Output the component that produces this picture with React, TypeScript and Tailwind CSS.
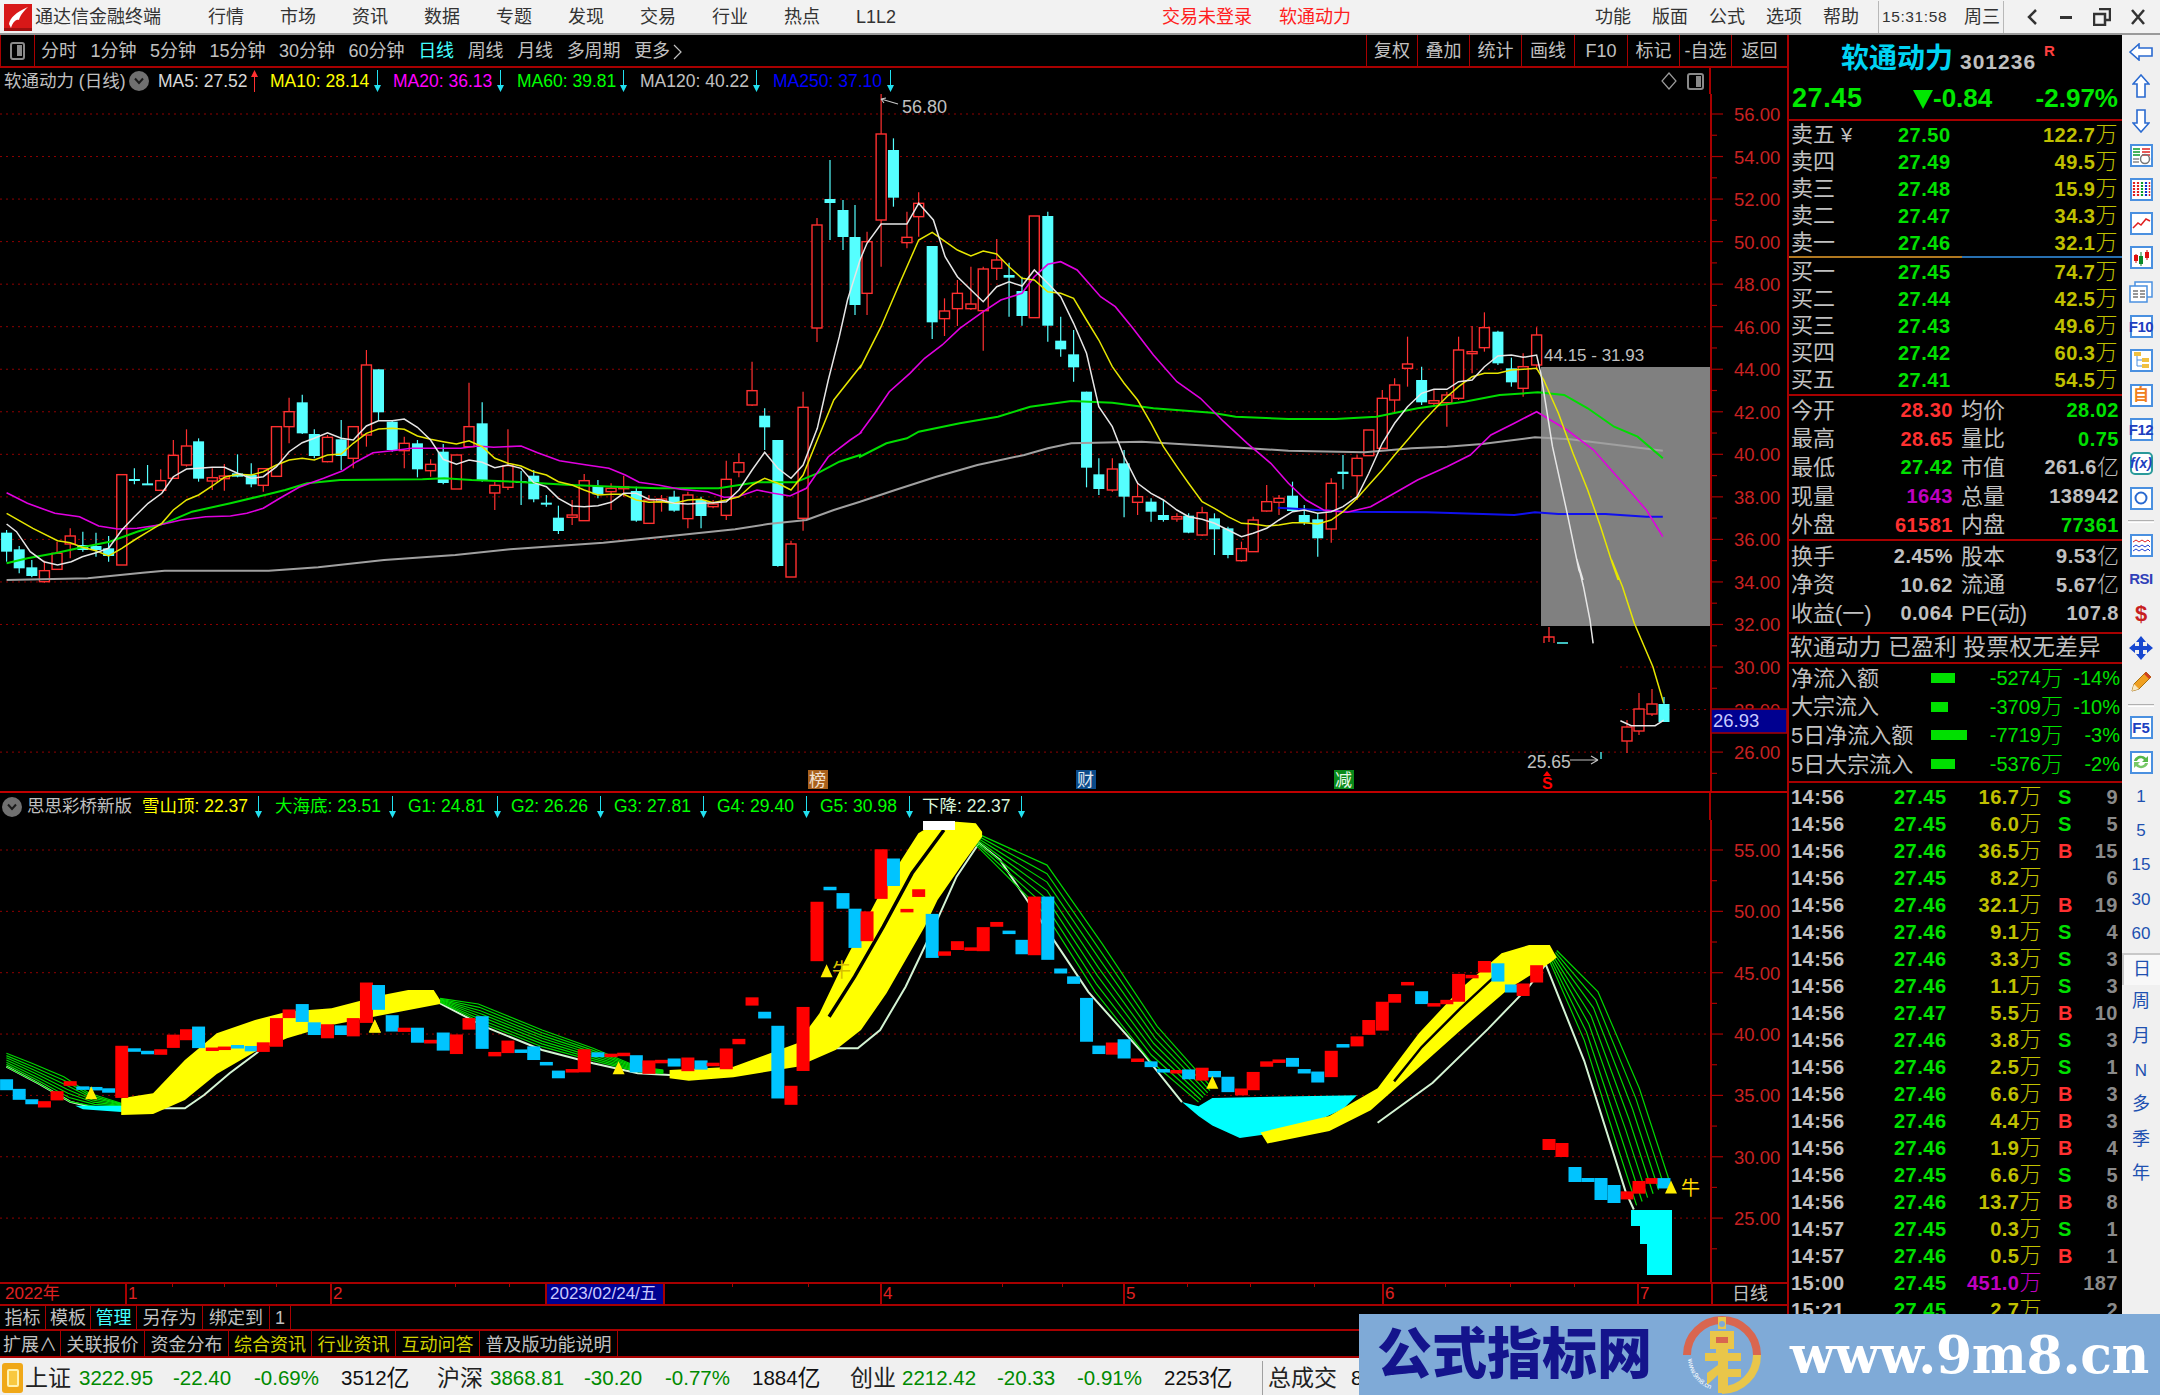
import React from "react";

type Pt = number[];
type Fn = (x: number, y: number) => [number, number];
const z9: Fn = (x, y) => [x / 1.823, y / 3 + 300];
const z10: Fn = (x, y) => [x / 1.704 + 860, y / 3 + 80];
const z11: Fn = (x, y) => [x / 2.306 + 1100, y / 3 + 560];
const z12: Fn = (x, y) => [x / 1.568, y / 3 + 800];
const sh: Fn = (x, y) => [x * 1.3776, y * 1.3776];

function conv(f: Fn, a: Pt): [number, number][] {
  const r: [number, number][] = [];
  for (let i = 0; i < a.length; i += 2) r.push(f(a[i], a[i + 1]));
  return r;
}
const str = (p: [number, number][]) => p.map((q) => `${q[0].toFixed(1)},${q[1].toFixed(1)}`).join(" ");

const ma5 = [
  ...conv(z9, [12,672,30,695,55,755,80,785,105,795,130,785,150,770,175,758,198,745,222,690,245,650,270,610,295,580,316,530,340,507,362,505,387,502,409,502,433,520,458,535,480,530,504,500,527,455,551,428,573,415,597,398,622,415,644,420,668,378,690,362,715,362,737,357,761,382,785,420,808,478,832,493,855,480,879,487,902,503,926,495,950,505,973,548,996,560,1018,595,1043,618,1065,620,1090,617,1114,607,1137,580,1160,580,1183,598,1206,600,1229,610,1254,612,1278,610,1300,608,1324,605,1347,570,1371,510,1394,457,1418,505,1442,535,1464,495,1490,385,1510,240,1530,110,1545,0]),
  ...conv(z10, [0,540,12,490,36,432,80,432,100,370,125,420,145,530,166,590,210,665,233,620,254,605,276,618,297,570,320,610,342,650,364,730,386,820,407,980,430,1040,450,1130,473,1210,496,1240,517,1260,540,1290,560,1310,583,1318,604,1330,627,1350,650,1370,670,1360,693,1345,714,1320,737,1295,757,1290,780,1300,803,1295,823,1280,847,1250,867,1180,890,1090,911,1030,933,980,957,940,978,928,1000,928,1020,905,1043,900,1064,860,1087,828,1110,825,1130,832,1153,825,1160,880,1180,1100,1205,1300,1225,1470,1232,1500]),
  ...conv(z11, [1100,0,1115,80,1130,180,1137,250]),
];
const ma5b = conv(z11, [1200,482,1225,497,1280,497,1295,485,1300,480]);
const ma10 = [
  ...conv(z9, [12,640,60,685,105,722,128,728,150,742,175,752,198,768,222,745,245,720,270,695,295,670,316,630,340,600,362,585,387,558,409,532,433,523,458,525,480,515,504,495,527,480,551,475,573,480,597,465,622,462,644,430,668,400,690,387,715,385,737,388,761,408,785,418,808,425,832,432,855,422,879,440,902,475,926,490,950,498,973,515,996,525,1018,545,1043,555,1065,570,1090,585,1114,583,1137,583,1160,600,1183,607,1206,605,1229,610,1254,600,1278,598,1300,608,1324,600,1347,590,1371,555,1394,535,1418,550,1442,570,1464,525,1490,420,1520,300,1568,200]),
  ...conv(z10, [0,865,36,740,70,600,100,480,123,457,166,510,189,528,210,513,233,522,254,560,276,595,297,600,320,635,342,640,364,655,386,720,407,780,430,860,450,910,473,960,496,1030,517,1100,540,1160,560,1210,583,1265,604,1285,627,1310,650,1330,670,1332,693,1338,714,1335,737,1328,757,1328,780,1332,803,1320,823,1295,847,1255,867,1215,890,1170,911,1125,933,1080,957,1030,978,990,1000,950,1020,920,1043,890,1064,880,1087,880,1110,870,1130,868,1153,865,1165,900,1190,1000,1215,1120,1240,1230,1262,1340,1282,1450,1292,1500]),
  ...conv(z11, [1180,0,1205,80,1232,190,1275,320,1300,430]),
];
const ma20 = [
  ...conv(z9, [12,578,50,610,100,640,145,650,180,678,215,687,250,685,290,675,330,660,375,650,420,648,450,640,480,625,510,595,545,562,590,535,625,512,650,485,680,458,715,452,750,445,800,445,840,445,870,438,900,442,950,438,980,458,1020,482,1070,495,1110,505,1140,525,1165,547,1200,555,1240,568,1290,575,1320,592,1345,590,1380,570,1410,580,1440,588,1470,565,1510,470,1550,420,1568,400]),
  ...conv(z10, [0,1060,25,1000,50,935,85,880,110,835,140,795,170,745,210,695,240,660,276,640,297,590,320,553,342,545,370,570,410,650,435,680,465,745,500,825,540,905,580,955,620,1025,660,1090,700,1150,730,1210,760,1260,790,1290,830,1297,870,1280,900,1250,950,1200,1000,1160,1040,1125,1075,1065,1115,1030,1153,995,1205,1050,1250,1110,1300,1210,1340,1290,1368,1370]),
];
const ma60 = [
  ...conv(z9, [12,790,50,775,100,760,150,742,200,725,250,695,300,670,350,635,420,610,470,590,520,570,560,550,620,540,770,538,810,535,860,540,940,545,1040,555,1120,560,1200,565,1310,565,1380,547,1450,547,1490,520,1530,485,1568,465]),
  ...conv(z10, [0,1130,45,1090,80,1075,100,1055,170,1030,235,1010,290,980,360,963,430,968,500,985,600,998,640,1010,730,1017,810,1017,880,1010,950,985,1030,965,1090,945,1155,937,1200,945,1240,985,1285,1040,1325,1070,1368,1135]),
];
const ma120 = [
  ...conv(z9, [12,840,160,835,260,818,300,812,490,812,580,802,700,780,830,765,930,748,1100,728,1200,712,1340,688,1400,672,1470,660,1520,630,1568,605]),
  ...conv(z10, [0,1265,60,1230,130,1190,200,1155,280,1125,320,1105,360,1090,480,1085,600,1098,730,1112,860,1117,940,1105,1000,1100,1060,1092,1150,1072,1210,1078,1300,1097,1368,1112]),
];
const ma250 = conv(z10, [712,1283,830,1295,965,1297,1075,1303,1115,1305,1150,1297,1190,1302,1270,1302,1340,1310,1368,1310]);

type C = { x: number; t: number; b: number; wt: number; wb: number; up: boolean };
const mk = (f: Fn, rows: (number | string)[][]): C[] =>
  rows.map((r) => {
    const [x, t] = f(r[0] as number, r[1] as number);
    const b = f(0, r[2] as number)[1];
    const wt = f(0, r[3] as number)[1];
    const wb = f(0, r[4] as number)[1];
    return { x, t, b, wt, wb, up: r[5] === "r" };
  });
const id: Fn = (x, y) => [x, y];

const candles: C[] = [
  ...mk(z9, [
    [12,698,755,690,785,"c"],[35,748,805,738,820,"c"],[58,802,828,780,832,"c"],[81,812,845,782,848,"r"],[104,760,808,725,810,"r"],[128,708,732,685,775,"r"],[151,735,750,695,755,"c"],[175,738,750,698,770,"c"],[198,745,768,708,785,"c"],[222,524,795,524,795,"r"],[245,537,541,505,553,"c"],[269,550,553,495,553,"c"],[293,542,571,508,573,"r"],[316,466,535,420,535,"r"],[340,438,495,388,500,"r"],[362,424,536,415,545,"c"],[387,533,543,505,570,"r"],[409,528,536,492,572,"r"],[433,520,530,463,532,"c"],[458,525,553,490,562,"c"],[480,506,556,505,575,"r"],[504,380,529,380,530,"r"],[527,335,380,293,430,"r"],[551,307,400,284,402,"c"],[573,402,468,388,475,"c"],[597,412,485,405,487,"r"],[622,418,468,360,510,"c"],[644,380,475,380,505,"r"],[668,195,405,150,440,"r"],[690,208,337,208,362,"c"],[715,365,450,360,455,"c"],[737,430,452,410,505,"r"],[761,430,508,420,532,"c"],[785,493,512,478,530,"r"],[808,455,549,432,553,"c"],[832,465,567,465,567,"r"],[855,380,440,248,440,"r"],[879,370,540,307,545,"c"],[902,556,579,545,630,"r"],[926,497,562,388,570,"r"],[950,543,545,513,615,"c"],[973,527,598,510,607,"c"],[996,608,612,585,620,"c"],[1018,653,693,617,702,"c"],[1043,645,652,600,675,"r"],[1065,542,662,522,662,"r"],[1090,558,583,540,595,"c"],[1114,565,575,550,630,"r"],[1137,560,565,527,590,"r"],[1160,573,662,560,665,"c"],[1183,600,670,585,670,"r"],[1206,597,605,585,635,"r"],[1229,590,632,572,635,"c"],[1254,585,656,575,685,"r"],[1278,600,648,590,685,"c"],[1300,612,620,600,625,"r"],[1324,538,646,482,660,"r"],[1347,488,516,460,532,"r"],[1371,272,315,185,318,"r"],[1394,347,382,325,450,"c"],[1418,420,798,420,800,"c"],[1442,732,831,722,831,"r"],[1464,322,655,275,692,"r"],
  ]),
  ...mk(id, [[817,225,328,218,342,"r"],[830,199,203,160,240,"c"],[843,210,237,200,250,"c"],[855,237,305,205,315,"c"]]),
  ...mk(z10, [
    [12,485,640,455,705,"r"],[36,162,420,20,560,"r"],[57,210,353,175,380,"c"],[80,472,488,395,505,"r"],[100,370,410,337,470,"r"],[123,498,727,498,777,"c"],[144,693,716,655,768,"r"],[166,640,686,600,738,"r"],[189,672,686,560,690,"r"],[210,567,692,560,812,"r"],[233,540,565,477,600,"r"],[254,585,593,548,710,"c"],[276,633,708,590,737,"c"],[297,408,713,408,713,"r"],[320,408,737,395,785,"c"],[342,782,808,710,830,"c"],[364,823,862,750,905,"c"],[386,935,1163,935,1222,"c"],[407,1183,1227,1135,1245,"c"],[430,1167,1230,1135,1235,"r"],[450,1150,1250,1110,1312,"c"],[473,1250,1267,1205,1305,"r"],[496,1265,1295,1255,1325,"c"],[517,1305,1320,1260,1325,"c"],[540,1310,1317,1300,1325,"r"],[560,1307,1358,1300,1360,"c"],[583,1298,1365,1280,1368,"r"],[604,1315,1348,1300,1425,"c"],[627,1345,1425,1340,1435,"c"],[650,1406,1442,1385,1445,"r"],[670,1320,1415,1310,1415,"r"],[693,1265,1293,1215,1295,"r"],[714,1255,1267,1245,1305,"r"],[737,1247,1293,1205,1295,"c"],[757,1305,1328,1275,1335,"c"],[780,1318,1375,1300,1430,"c"],[803,1210,1347,1195,1388,"r"],[823,1175,1182,1125,1228,"c"],[847,1135,1187,1125,1260,"r"],[867,1050,1127,1050,1127,"r"],[890,955,1105,930,1108,"r"],[911,915,960,895,1000,"r"],[933,852,865,770,920,"r"],[957,900,967,860,975,"c"],[978,962,970,930,975,"r"],[1000,945,968,935,1040,"r"],[1020,810,955,770,960,"r"],[1043,815,820,738,880,"r"],[1064,743,803,697,815,"r"],[1087,755,850,752,855,"c"],[1110,865,907,833,920,"c"],[1130,860,925,820,950,"r"],[1153,765,855,742,870,"r"],
  ]),
];
const tail: C[] = [
  ...mk(id, [[1627,727,741,720,753,"r"],[1639,709,731,693,735,"r"],[1652,704,714,689,716,"r"],[1664,704,722,697,722,"c"]]),
];
const subY = (y: number) => {
  const p = 56 - (y - 114) / 21.27;
  return 850 + (55 - p) * 12.27;
};
const subExtra: [number, number, number, boolean][] = [
  [1549, 1139, 1150, true],
  [1562, 1143, 1157, true],
  [1575, 1167, 1182, false],
  [1588, 1178, 1182, false],
  [1601, 1178, 1200, false],
  [1614, 1185, 1203, false],
];

const R = "#ff3030";
const CY = "#55ffff";

function CandleMark({ c }: { c: C }) {
  const col = c.up ? R : CY;
  const h = Math.max(c.b - c.t, 2);
  return (
    <g>
      <line x1={c.x} x2={c.x} y1={c.wt} y2={c.wb} stroke={col} strokeWidth={1.2} />
      {c.up ? (
        <rect x={c.x - 5} y={c.t} width={10} height={h} fill="#000" stroke={col} strokeWidth={1.4} />
      ) : (
        <rect x={c.x - 5.5} y={c.t} width={11} height={h} fill={col} />
      )}
    </g>
  );
}

function MainChart() {
  const prices = [56, 54, 52, 50, 48, 46, 44, 42, 40, 38, 36, 34, 32, 30, 28, 26];
  const py = (p: number) => 114 + (56 - p) * 21.27;
  const minor: number[] = [];
  for (let p = 25; p <= 57; p++) minor.push(p);
  return (
    <svg viewBox="0 94 1787 697" className="block h-[697px] w-[1787px]">
      {prices.map((p) => {
        const y = py(p);
        const dashed = "2 4";
        if (p === 30 || p === 28) return <line key={p} x1={1620} x2={1711} y1={y} y2={y} stroke="#900000" strokeDasharray={dashed} />;
        return <line key={p} x1={0} x2={1711} y1={y} y2={y} stroke="#900000" strokeDasharray={dashed} />;
      })}
      {candles.map((c, i) => (
        <CandleMark key={i} c={c} />
      ))}
      <rect x={1541} y={367} width={170} height={259} fill="#808080" />
      <polyline points={str(ma120)} fill="none" stroke="#a0a0a0" strokeWidth={2} />
      <polyline points={str(ma250)} fill="none" stroke="#1010ee" strokeWidth={2} />
      <polyline points={str(ma60)} fill="none" stroke="#00dd00" strokeWidth={2} />
      <polyline points={str(ma20)} fill="none" stroke="#e000e0" strokeWidth={1.6} />
      <polyline points={str(ma10)} fill="none" stroke="#e6e600" strokeWidth={1.5} />
      <polyline points={str(ma5)} fill="none" stroke="#e6e6e6" strokeWidth={1.5} />
      {/* tail after the gap */}
      <path d="M1549 642V627M1544 643V637H1554V643" fill="none" stroke={R} strokeWidth={1.3} />
      <line x1={1557} x2={1568} y1={643} y2={643} stroke={CY} strokeWidth={1.5} />
      <line x1={1601} x2={1601} y1={752} y2={759} stroke={CY} strokeWidth={1.3} />
      {tail.map((c, i) => (
        <CandleMark key={i} c={c} />
      ))}
      <polyline points={str(ma5b)} fill="none" stroke="#e6e6e6" strokeWidth={1.5} />
      {/* annotations */}
      <path d="M898 104L881 99M881 99l5 -1M881 99l3 4" fill="none" stroke="#c8c8c8" strokeWidth={1.1} />
      <text x={902} y={113} fontSize={18} fill="#c0c0c0">56.80</text>
      <text x={1544} y={361} fontSize={17} fill="#c0c0c0">44.15 - 31.93</text>
      <text x={1527} y={768} fontSize={17.5} fill="#c0c0c0">25.65</text>
      <path d="M1570 760H1598M1598 760l-7 -4M1598 760l-7 4" fill="none" stroke="#c0c0c0" strokeWidth={1.2} />
      <rect x={808} y={770} width={20} height={19} fill="#a8601c" />
      <text x={809} y={786} fontSize={17} fill="#f0e0d0">榜</text>
      <rect x={1076} y={770} width={20} height={19} fill="#0a4a8a" />
      <text x={1077} y={786} fontSize={17} fill="#e0e8f0">财</text>
      <rect x={1334} y={770} width={20} height={19} fill="#0a8a1a" />
      <text x={1335} y={786} fontSize={17} fill="#e8f8e8">减</text>
      <path d="M1547 771l4 5h-8z" fill="#ff0000" />
      <text x={1542} y={789} fontSize={16} fontWeight={700} fill="#ff0000">S</text>
      {/* axis */}
      <line x1={1711} x2={1711} y1={94} y2={791} stroke="#a80000" strokeWidth={2} />
      {minor.map((p) => (
        <line key={p} x1={1711} x2={p % 2 === 0 ? 1723 : 1717} y1={py(p)} y2={py(p)} stroke="#a80000" strokeWidth={1.2} />
      ))}
      {prices.map((p) => (
        <text key={p} x={1734} y={py(p) + 7} fontSize={18.5} fill="#c82222">{p.toFixed(2)}</text>
      ))}
      <rect x={1711} y={709} width={76} height={24} fill="#000090" stroke="#a80000" strokeWidth={1.5} />
      <text x={1713} y={727} fontSize={18.5} fill="#c8c8ff">26.93</text>
    </svg>
  );
}

const bandA = [...conv(z12, [190,895,240,880,290,780,340,700,400,660,450,635,520,625,600,585,640,570,680,570,690,600]), ...conv(z12, [690,612,600,645,520,675,450,715,400,755,340,822,290,900,240,942,190,945])];
const bandB = [...conv(z12, [1050,810,1150,800,1250,730,1285,640,1320,500,1380,280,1440,100,1470,65,1500,65,1530,70,1540,95]), ...conv(z12, [1540,110,1510,190,1470,300,1450,380,1420,480,1390,580,1350,690,1310,750,1250,800,1150,832,1080,842,1050,835])];
const bandC = [...conv(sh, [915,822,965,810,1000,790,1030,750,1060,718,1090,692,1110,686,1125,686,1130,695]), ...conv(sh, [1125,699,1095,718,1060,748,1030,775,995,806,965,821,920,830])];
const cyanBlock = conv(sh, [858,800,870,803,880,797,985,795,975,805,960,812,930,822,900,826,880,817,870,810]);
const paleParts = [
  conv(z12, [10,800,60,850,110,905,150,925,290,925,320,885,360,820,405,755]),
  [...conv(z12, [690,610,760,680,850,750,930,790,1000,820,1050,825,1150,825,1250,775,1310,745,1345,745,1380,690,1420,560,1460,400,1500,230,1535,130,1568,180]), ...conv(sh, [760,675,790,720,830,765,858,800])],
  conv(sh, [1000,815,1040,786,1080,747,1110,716,1122,700,1150,770,1180,865,1186,878]),
];
const gBands: [[number, number][], [number, number][]][] = [
  [conv(z12, [10,760,50,790,100,830,140,880,190,910]), conv(z12, [10,800,60,850,110,905,150,920,190,920])],
  [conv(z12, [690,595,750,612,850,690,930,745,1000,800,1040,810]), conv(z12, [690,607,760,672,850,740,930,782,1000,815,1040,820])],
  [conv(sh, [707,604,760,628,800,685,840,745,880,790]), conv(sh, [707,612,760,665,795,720,835,770,870,800])],
  [conv(sh, [1130,690,1160,720,1190,790,1212,858]), conv(sh, [1125,698,1150,755,1175,835,1188,875])],
];
const tris = [...conv(sh, [600,705,272,745,880,786,1213,862]), ...conv(z12, [143,880,588,680,970,805])];

function SubChart() {
  const levels = [55, 50, 45, 40, 35, 30, 25];
  const py = (p: number) => 850 + (55 - p) * 12.27;
  const ticks: number[] = [];
  for (let p = 22.5; p <= 60; p += 2.5) ticks.push(p);
  const green: React.ReactNode[] = [];
  gBands.forEach((b, k) => {
    for (let i = 0; i <= 6; i++) {
      const t = i / 6;
      const line = b[0].map((q, j) => [q[0] + (b[1][j][0] - q[0]) * t, q[1] + (b[1][j][1] - q[1]) * t] as [number, number]);
      green.push(<polyline key={`${k}-${i}`} points={str(line)} fill="none" stroke="#00d800" strokeWidth={1.2} />);
    }
  });
  return (
    <svg viewBox="0 820 1787 462" className="block h-[462px] w-[1787px]">
      {levels.map((p) => (
        <line key={p} x1={0} x2={1711} y1={py(p)} y2={py(p)} stroke="#900000" strokeDasharray="2 4" />
      ))}
      {paleParts.map((p, i) => (
        <polyline key={i} points={str(p)} fill="none" stroke="#d4f4d4" strokeWidth={2} />
      ))}
      {green}
      <polygon points={str(cyanBlock)} fill="#00ffff" />
      <polygon points={str(conv(z12, [118,917,205,917,190,936,130,928]))} fill="#00ffff" />
      <polygon points={str(bandA)} fill="#ffff00" />
      <polygon points={str(bandB)} fill="#ffff00" />
      <polygon points={str(bandC)} fill="#ffff00" />
      <polyline points={str(conv(z12, [1300,650,1340,530,1385,380,1430,220,1480,90]))} fill="none" stroke="#000" strokeWidth={3.5} />
      <polyline points={str(conv(sh, [1012,785,1032,760,1060,732,1088,706]))} fill="none" stroke="#000" strokeWidth={2.5} />
      <rect x={923} y={821} width={32} height={9} fill="#ffffff" />
      {candles.concat(tail).map((c, i) => {
        const t = subY(c.t);
        const b = subY(c.b);
        return <rect key={i} x={c.x - 6.5} y={t} width={13} height={Math.max(b - t, 3.5)} fill={c.up ? "#ff0000" : "#00c4ff"} />;
      })}
      {subExtra.map((e) => (
        <rect key={e[0]} x={e[0] - 6.5} y={e[1]} width={13} height={e[2] - e[1]} fill={e[3] ? "#ff0000" : "#00c4ff"} />
      ))}
      <path d="M1631 1210H1672V1275H1647V1244H1640V1226H1631Z" fill="#00ffff" />
      {tris.map((q, i) => (
        <path key={i} d={`M${q[0].toFixed(1)} ${(q[1] - 7).toFixed(1)}l6 13h-12z`} fill="#ffee00" />
      ))}
      <text x={832} y={977} fontSize={19} fill="#d8c000">牛</text>
      <text x={1681} y={1195} fontSize={19} fill="#ffd800">牛</text>
      <line x1={1711} x2={1711} y1={820} y2={1282} stroke="#a80000" strokeWidth={2} />
      {ticks.map((p) => (
        <line key={p} x1={1711} x2={p % 5 === 0 ? 1723 : 1717} y1={py(p)} y2={py(p)} stroke="#a80000" strokeWidth={1.2} />
      ))}
      {levels.map((p) => (
        <text key={p} x={1734} y={py(p) + 7} fontSize={18.5} fill="#c82222">{p.toFixed(2)}</text>
      ))}
    </svg>
  );
}

function Arrow({ up }: { up?: boolean }) {
  const c = up ? "#ff3030" : "#22e0f0";
  return (
    <svg width="9" height="22" viewBox="0 0 9 22" className="shrink-0">
      {up ? <path d="M4.5 0L8 7H5V22H4V7H1Z" fill={c} /> : <path d="M4 0H5V15H8L4.5 22L1 15H4Z" fill={c} />}
    </svg>
  );
}

function Badge() {
  return (
    <span className="flex h-[20px] w-[20px] shrink-0 items-center justify-center rounded-full bg-[#707070]">
      <svg width="10" height="8" viewBox="0 0 10 8"><path d="M1 1.5L5 6L9 1.5" fill="none" stroke="#1a1a1a" strokeWidth="2" /></svg>
    </span>
  );
}

function MainLegend() {
  return (
    <div className="relative flex h-[26px] w-[1711px] items-center border-r-2 border-[#a80000] text-[17.5px] whitespace-nowrap">
      <span className="ml-[4px] w-[125px] text-[#c0c0c0]">软通动力 (日线)</span>
      <Badge />
      <span className="ml-[9px] w-[92px] text-[#d8d8d8]">MA5: 27.52</span>
      <Arrow up />
      <span className="ml-[11px] w-[103px] text-[#ffff00]">MA10: 28.14</span>
      <Arrow />
      <span className="ml-[11px] w-[103px] text-[#ff00ff]">MA20: 36.13</span>
      <Arrow />
      <span className="ml-[12px] w-[102px] text-[#00ff00]">MA60: 39.81</span>
      <Arrow />
      <span className="ml-[12px] w-[112px] text-[#c0c0c0]">MA120: 40.22</span>
      <Arrow />
      <span className="ml-[12px] w-[113px] text-[#0000ff]">MA250: 37.10</span>
      <Arrow />
      <svg width="16" height="20" viewBox="0 0 16 20" className="absolute left-[1661px] top-[3px]"><path d="M8 2L15 10L8 18L1 10Z" fill="none" stroke="#9a9a9a" strokeWidth="1.2" /></svg>
      <span className="absolute left-[1687px] top-[5px] flex h-[17px] w-[17px] items-center justify-end rounded-[3px] border-2 border-[#8a8a8a] pr-[1px]"><span className="h-[11px] w-[5px] bg-[#8a8a8a]" /></span>
    </div>
  );
}

function SubLegend() {
  const g = [
    { t: "G1: 24.81", m: "ml-[11px]" },
    { t: "G2: 26.26", m: "ml-[9px]" },
    { t: "G3: 27.81", m: "ml-[9px]" },
    { t: "G4: 29.40", m: "ml-[9px]" },
    { t: "G5: 30.98", m: "ml-[9px]" },
  ];
  return (
    <div className="flex h-[27px] w-[1711px] items-center border-r-2 border-[#a80000] text-[17.5px] whitespace-nowrap">
      <span className="ml-[2px]"><Badge /></span>
      <span className="ml-[5px] w-[115px] text-[17.5px] text-[#c0c0c0]">思思彩桥新版</span>
      <span className="w-[112px] text-[#ffff00]">雪山顶: 22.37</span>
      <Arrow />
      <span className="ml-[12px] w-[113px] text-[#00ff00]">大海底: 23.51</span>
      <Arrow />
      {g.map((x) => (
        <React.Fragment key={x.t}>
          <span className={`${x.m} w-[85px] text-[#00ff00]`}>{x.t}</span>
          <Arrow />
        </React.Fragment>
      ))}
      <span className="ml-[8px] w-[95px] text-[#d8f4d8]">下降: 22.37</span>
      <Arrow />
    </div>
  );
}

function TitleBar() {
  const menu = ["行情", "市场", "资讯", "数据", "专题", "发现", "交易", "行业", "热点", "L1L2"];
  const right = ["功能", "版面", "公式", "选项", "帮助"];
  return (
    <div className="flex h-[35px] w-[2160px] items-center border-b-2 border-[#9a9a9a] bg-[#f2f2f2] pt-[1px] text-[18px] whitespace-nowrap text-[#333333]">
      <svg width="28" height="27" viewBox="0 0 28 27" className="ml-[4px] shrink-0">
        <rect width="28" height="27" fill="#d81818" />
        <path d="M5 20C6 14 12 8 24 3C18 9 16 12 15 16C13 15 9 17 7 24Z" fill="#ffffff" />
        <rect y="24" width="28" height="3" fill="#a01010" />
      </svg>
      <span className="ml-[3px] w-[173px]">通达信金融终端</span>
      <div className="flex gap-[36px]">
        {menu.map((m) => (
          <span key={m} className="w-[36px]">{m}</span>
        ))}
      </div>
      <span className="ml-[270px] w-[117px] text-[#ff2020]">交易未登录</span>
      <span className="w-[316px] text-[#ff2020]">软通动力</span>
      <div className="flex gap-[21px]">
        {right.map((m) => (
          <span key={m} className="w-[36px]">{m}</span>
        ))}
      </div>
      <div className="ml-[19px] flex h-full items-center border-x border-[#b8b8b8] pl-[3px] pr-[3px] text-[16px]">
        <span className="w-[82px] tracking-[0.6px] text-[15.5px]">15:31:58</span>
        <span className="text-[18px]">周三</span>
      </div>
      <svg width="12" height="18" viewBox="0 0 12 18" className="ml-[22px]"><path d="M10 2L3 9L10 16" fill="none" stroke="#333" strokeWidth="2.5" /></svg>
      <span className="ml-[22px] h-[3px] w-[12px] bg-[#333333]" />
      <svg width="18" height="18" viewBox="0 0 18 18" className="ml-[21px]"><path d="M6 1h11v11h-4M1 6h11v11H1z" fill="none" stroke="#333" strokeWidth="2.5" /></svg>
      <svg width="16" height="16" viewBox="0 0 16 16" className="ml-[19px]"><path d="M2 1L14 15M14 1L2 15" stroke="#333" strokeWidth="2.5" /></svg>
    </div>
  );
}

function ChartToolbar() {
  const periods = ["分时", "1分钟", "5分钟", "15分钟", "30分钟", "60分钟", "日线", "周线", "月线", "多周期"];
  const tools = [
    { t: "复权", w: "w-[51px]" },
    { t: "叠加", w: "w-[52px]" },
    { t: "统计", w: "w-[52px]" },
    { t: "画线", w: "w-[53px]" },
    { t: "F10", w: "w-[53px]" },
    { t: "标记", w: "w-[52px]" },
    { t: "-自选", w: "w-[52px]" },
    { t: "返回", w: "w-[56px]" },
  ];
  return (
    <div className="flex h-[33px] w-[1787px] items-center border-b-2 border-[#a80000] text-[18px] whitespace-nowrap text-[#c0c0c0]">
      <div className="flex h-full w-[35px] items-center justify-center border-x border-[#a80000]">
        <span className="flex h-[18px] w-[15px] items-center justify-end rounded-[3px] border-2 border-[#8a8a8a] pr-[1px]"><span className="h-[11px] w-[5px] bg-[#8a8a8a]" /></span>
      </div>
      <div className="ml-[6px] flex w-[1325px] items-center gap-[13.5px] pt-[2px]">
        {periods.map((p) => (
          <span key={p} className={p === "日线" ? "text-[#44ffff]" : ""}>{p}</span>
        ))}
        <span className="flex items-center gap-[3px]">更多<svg width="9" height="16" viewBox="0 0 9 16"><path d="M1 1L8 8L1 15" fill="none" stroke="#c0c0c0" strokeWidth="1.2" /></svg></span>
      </div>
      <div className="flex h-full">
        {tools.map((t) => (
          <span key={t.t} className={`flex ${t.w} h-full items-center justify-center border-l border-[#a80000] pt-[2px]`}>{t.t}</span>
        ))}
      </div>
    </div>
  );
}

function TimeAxis() {
  const segs = [
    { t: "2022年", w: "w-[125px] pl-[5px]", c: "text-[#e02020]" },
    { t: "1", w: "w-[205px] pl-[1px]", c: "text-[#e02020]" },
    { t: "2", w: "w-[215px] pl-[1px]", c: "text-[#e02020]" },
    { t: "2023/02/24/五", w: "w-[118px] pl-[3px] bg-[#000090]", c: "text-[#c8c8ff]" },
    { t: "", w: "w-[217px]", c: "" },
    { t: "4", w: "w-[243px] pl-[1px]", c: "text-[#e02020]" },
    { t: "5", w: "w-[259px] pl-[1px]", c: "text-[#e02020]" },
    { t: "6", w: "w-[255px] pl-[1px]", c: "text-[#e02020]" },
    { t: "7", w: "w-[74px] pl-[1px]", c: "text-[#e02020]" },
  ];
  const ticks = [172, 224, 276, 455, 509, 732, 808, 1002, 1062, 1187, 1250, 1314, 1445, 1510, 1574];
  return (
    <div className="relative flex h-[24px] w-[1787px] border-y-2 border-[#a80000] text-[17px] whitespace-nowrap">
      {segs.map((s, i) => (
        <span key={i} className={`flex ${s.w} h-full items-center ${s.c} ${i > 0 ? "border-l-2 border-[#a80000]" : ""}`}>{s.t}</span>
      ))}
      <span className="flex h-full w-[76px] items-center justify-center border-l-2 border-[#a80000] text-[18px] text-[#c0c0c0]">日线</span>
      {ticks.map((x, i) => (
        <span key={i} className="absolute top-0 h-[3px] w-[1px] bg-[#a80000]" style={{ left: x }} />
      ))}
    </div>
  );
}

function TabRows() {
  const a = [
    { t: "指标", w: "w-[46px]", c: "" },
    { t: "模板", w: "w-[45px]", c: "" },
    { t: "管理", w: "w-[46px]", c: "text-[#44ffff]" },
    { t: "另存为", w: "w-[66px]", c: "" },
    { t: "绑定到", w: "w-[67px]", c: "" },
    { t: "1", w: "w-[21px]", c: "" },
  ];
  const b = [
    { t: "扩展∧", w: "w-[61px]", c: "" },
    { t: "关联报价", w: "w-[84px]", c: "" },
    { t: "资金分布", w: "w-[84px]", c: "" },
    { t: "综合资讯", w: "w-[83px]", c: "text-[#d0d000]" },
    { t: "行业资讯", w: "w-[84px]", c: "text-[#d0d000]" },
    { t: "互动问答", w: "w-[84px]", c: "text-[#d0d000]" },
    { t: "普及版功能说明", w: "w-[138px]", c: "" },
  ];
  return (
    <>
      <div className="flex h-[25px] w-[1787px] items-stretch border-b-2 border-[#a80000] text-[18px] whitespace-nowrap text-[#c0c0c0]">
        {a.map((x) => (
          <span key={x.t} className={`flex ${x.w} items-center justify-center border-r border-[#a80000] pt-[2px] ${x.c}`}>{x.t}</span>
        ))}
      </div>
      <div className="flex h-[27px] w-[1787px] items-stretch border-b-2 border-[#a80000] text-[18px] whitespace-nowrap text-[#c0c0c0]">
        {b.map((x) => (
          <span key={x.t} className={`flex ${x.w} items-center justify-center border-r border-[#a80000] pt-[3px] ${x.c}`}>{x.t}</span>
        ))}
      </div>
    </>
  );
}

const Wan = ({ c }: { c?: string }) => <span className={`text-[22px] font-light leading-none ${c ?? "text-[#c0c000]"}`}>万</span>;

function Quote({ l, p, v, y }: { l: string; p: string; v: string; y?: boolean }) {
  return (
    <div className="flex h-[27px] items-center overflow-hidden pl-[2px] pr-[4px]">
      <span className="flex w-[107px] items-center text-[22px] text-[#c0c0c0]">
        {l}
        {y && <span className="ml-[6px] text-[20px]">¥</span>}
      </span>
      <span className="w-[55px] text-[20px] font-bold tracking-[0.5px] text-[#00e000]">{p}</span>
      <span className="flex flex-1 items-center justify-end text-[20px] font-bold tracking-[0.5px] text-[#c0c000]">
        {v}
        <Wan />
      </span>
    </div>
  );
}

function Yi({ v }: { v: string }) {
  return (
    <span className="flex items-center justify-end">
      {v}
      <span className="text-[22px] font-light tracking-normal">亿</span>
    </span>
  );
}

function Info({ a, av, ac, b, bv, bc }: { a: string; av: string; ac: string; b: string; bv: React.ReactNode; bc: string }) {
  return (
    <div className="flex h-[28.6px] items-center overflow-hidden pl-[2px] pr-[3px] text-[22px] text-[#c0c0c0]">
      <span className="w-[72px] whitespace-nowrap">{a}</span>
      <span className={`w-[90px] text-right text-[20px] font-bold tracking-[0.5px] whitespace-nowrap ${ac}`}>{av}</span>
      <span className="ml-[8px] whitespace-nowrap">{b}</span>
      <span className={`flex-1 text-right text-[20px] font-bold tracking-[0.5px] whitespace-nowrap ${bc}`}>{bv}</span>
    </div>
  );
}

function Flow({ l, bar, v, pc }: { l: string; bar: string; v: string; pc: string }) {
  return (
    <div className="flex h-[28.6px] items-center overflow-hidden pl-[2px] pr-[2px]">
      <span className="w-[140px] text-[22px] whitespace-nowrap text-[#c0c0c0]">{l}</span>
      <span className="w-[52px]"><span className={`block h-[10px] ${bar} bg-[#00e000]`} /></span>
      <span className="flex w-[80px] items-center justify-end text-[20px] text-[#00e000]">{v}<span className="text-[22px] font-light">万</span></span>
      <span className="flex-1 text-right text-[20px] text-[#00e000]">{pc}</span>
    </div>
  );
}

const trades: [string, string, string, string, string, string?][] = [
  ["14:56","27.45","16.7","S","9"],["14:56","27.45","6.0","S","5"],["14:56","27.46","36.5","B","15"],["14:56","27.45","8.2","","6"],["14:56","27.46","32.1","B","19"],["14:56","27.46","9.1","S","4"],["14:56","27.46","3.3","S","3"],["14:56","27.46","1.1","S","3"],["14:56","27.47","5.5","B","10"],["14:56","27.46","3.8","S","3"],["14:56","27.46","2.5","S","1"],["14:56","27.46","6.6","B","3"],["14:56","27.46","4.4","B","3"],["14:56","27.46","1.9","B","4"],["14:56","27.45","6.6","S","5"],["14:56","27.46","13.7","B","8"],["14:57","27.45","0.3","S","1"],["14:57","27.46","0.5","B","1"],["15:00","27.45","451.0","","187","p"],["15:21","27.45","2.7","","2"],
];

function RightPanel() {
  return (
    <div className="flex h-[1323px] w-[335px] shrink-0 flex-col overflow-hidden border-l-2 border-[#a80000] bg-black whitespace-nowrap">
      <div className="flex h-[43px] items-end pl-[52px]">
        <span className="text-[28px] font-bold leading-[38px] text-[#00d4f4]">软通动力</span>
        <span className="ml-[7px] mb-[3px] text-[21px] font-bold tracking-[1px] leading-[26px] text-[#c0c0c0]">301236</span>
        <span className="ml-[8px] mb-[18px] text-[15px] font-bold leading-[18px] text-[#ff4040]">R</span>
      </div>
      <div className="flex h-[41px] items-center pl-[3px] pr-[4px] font-bold text-[#00e800]">
        <span className="w-[121px] text-[27px] tracking-[0.6px]">27.45</span>
        <svg width="20" height="20" viewBox="0 0 20 20" className="shrink-0"><path d="M0 1H20L10 20Z" fill="#00e800" /></svg>
        <span className="w-[91px] text-[26px]">-0.84</span>
        <span className="flex-1 text-right text-[26px]">-2.97%</span>
      </div>
      <div className="h-[137px] border-t-2 border-[#a80000]">
        <Quote l="卖五" p="27.50" v="122.7" y />
        <Quote l="卖四" p="27.49" v="49.5" />
        <Quote l="卖三" p="27.48" v="15.9" />
        <Quote l="卖二" p="27.47" v="34.3" />
        <Quote l="卖一" p="27.46" v="32.1" />
      </div>
      <div className="flex h-[2px]"><span className="w-[173px] bg-[#b07820]" /><span className="flex-1 bg-[#2870b0]" /></div>
      <div className="h-[136px]">
        <Quote l="买一" p="27.45" v="74.7" />
        <Quote l="买二" p="27.44" v="42.5" />
        <Quote l="买三" p="27.43" v="49.6" />
        <Quote l="买四" p="27.42" v="60.3" />
        <Quote l="买五" p="27.41" v="54.5" />
      </div>
      <div className="h-[145px] border-t-2 border-[#a80000]">
        <Info a="今开" av="28.30" ac="text-[#ff3030]" b="均价" bv="28.02" bc="text-[#00e000]" />
        <Info a="最高" av="28.65" ac="text-[#ff3030]" b="量比" bv="0.75" bc="text-[#00e000]" />
        <Info a="最低" av="27.42" ac="text-[#00e000]" b="市值" bv={<Yi v="261.6" />} bc="" />
        <Info a="现量" av="1643" ac="text-[#c000c0]" b="总量" bv="138942" bc="" />
        <Info a="外盘" av="61581" ac="text-[#ff3030]" b="内盘" bv="77361" bc="text-[#00e000]" />
      </div>
      <div className="h-[93px] border-t-2 border-[#a80000]">
        <div className="h-[1px]" />
        <Info a="换手" av="2.45%" ac="" b="股本" bv={<Yi v="9.53" />} bc="" />
        <Info a="净资" av="10.62" ac="" b="流通" bv={<Yi v="5.67" />} bc="" />
        <Info a="收益(一)" av="0.064" ac="" b="PE(动)" bv="107.8" bc="" />
      </div>
      <div className="flex h-[30px] items-center border-t-2 border-[#a80000] pl-[1px] text-[22.5px] tracking-[0.4px] text-[#c0c0c0]">软通动力 已盈利 投票权无差异</div>
      <div className="h-[119px] border-t-2 border-[#a80000]">
        <Flow l="净流入额" bar="w-[24px]" v="-5274" pc="-14%" />
        <Flow l="大宗流入" bar="w-[17px]" v="-3709" pc="-10%" />
        <Flow l="5日净流入额" bar="w-[36px]" v="-7719" pc="-3%" />
        <Flow l="5日大宗流入" bar="w-[24px]" v="-5376" pc="-2%" />
      </div>
      <div className="border-t-2 border-[#a80000]">
        {trades.map((t, i) => (
          <div key={i} className="flex h-[27px] items-center pl-[2px] pr-[4px] text-[20px] font-bold tracking-[0.5px]">
            <span className="w-[103px] text-[#c0c0c0]">{t[0]}</span>
            <span className="w-[60px] text-[#00e000]">{t[1]}</span>
            <span className={`flex w-[88px] items-center justify-end ${t[5] ? "text-[#c000c0]" : "text-[#c0c000]"}`}>
              {t[2]}
              <Wan c={t[5] ? "text-[#c000c0]" : "text-[#c0c000]"} />
            </span>
            <span className={`ml-[16px] w-[20px] ${t[3] === "B" ? "text-[#ff3030]" : "text-[#00e000]"}`}>{t[3]}</span>
            <span className="flex-1 text-right text-[#8a8a8a]">{t[4]}</span>
          </div>
        ))}
      </div>
    </div>
  );
}

function Tile({ children }: { children: React.ReactNode }) {
  return <span className="flex h-[23px] w-[23px] items-center justify-center border-2 border-[#4a90e0] bg-white">{children}</span>;
}

const Blue = "#2a6ad0";
function SideBar() {
  const lbl = "flex h-[34.3px] items-center justify-center text-[17px] text-[#2050b0]";
  const ic = "flex h-[34.3px] items-center justify-center";
  const cj = "text-[18px]";
  return (
    <div className="flex h-[1323px] w-[38px] shrink-0 flex-col bg-[#f0f0f0]">
      <div className={ic}><svg width="24" height="18" viewBox="0 0 24 18"><path d="M1 9L10 1V5H23V13H10V17Z" fill="#fff" stroke={Blue} strokeWidth="1.6" /></svg></div>
      <div className={ic}><svg width="18" height="24" viewBox="0 0 18 24"><path d="M9 1L17 10H13V23H5V10H1Z" fill="#fff" stroke={Blue} strokeWidth="1.6" /></svg></div>
      <div className={ic}><svg width="18" height="24" viewBox="0 0 18 24"><path d="M9 23L17 14H13V1H5V14H1Z" fill="#fff" stroke={Blue} strokeWidth="1.6" /></svg></div>
      <div className={ic}><Tile><svg width="19" height="19" viewBox="0 0 19 19"><path d="M1 3h7M1 6h7M1 9h7" stroke="#0a9a2a" strokeWidth="1.5" /><path d="M10 3h8M10 6h8M10 9h8" stroke="#e02020" strokeWidth="1.5" /><path d="M1 13h6M1 16h6" stroke="#888" strokeWidth="1.5" /><circle cx="13" cy="13" r="4.5" fill="none" stroke="#777" strokeWidth="1.5" /></svg></Tile></div>
      <div className={ic}><Tile><svg width="19" height="19" viewBox="0 0 19 19"><path d="M2 2v15M6 2v15" stroke="#e02020" strokeWidth="2.2" strokeDasharray="2 1" /><path d="M10 2v15" stroke="#0a9a2a" strokeWidth="2.2" strokeDasharray="2 1" /><path d="M14 2v15" stroke="#1030d0" strokeWidth="2.2" strokeDasharray="2 1" /><path d="M17.5 2v15" stroke="#e02020" strokeWidth="1.5" strokeDasharray="2 1" /></svg></Tile></div>
      <div className={ic}><Tile><svg width="19" height="19" viewBox="0 0 19 19"><path d="M1 14L6 9L9 11L14 5L18 7" fill="none" stroke="#e02020" strokeWidth="1.5" /></svg></Tile></div>
      <div className={ic}><Tile><svg width="19" height="19" viewBox="0 0 19 19"><path d="M4 6v9M15 2v10" stroke="#c01010" /><path d="M9 4v14" stroke="#0a7a2a" /><rect x="2" y="7" width="4" height="6" fill="#e01010" /><rect x="7" y="8" width="4" height="8" fill="#0a8a2a" /><rect x="13" y="4" width="4" height="6" fill="#e01010" /></svg></Tile></div>
      <div className={ic}><svg width="24" height="22" viewBox="0 0 24 22"><rect x="6" y="1" width="17" height="15" fill="#fff" stroke="#4a90e0" strokeWidth="1.5" /><rect x="1" y="5" width="17" height="16" fill="#fff" stroke="#4a90e0" strokeWidth="1.5" /><path d="M4 10h5M11 10h5M4 13h5M11 13h5M4 16h5M11 16h5" stroke="#777" strokeWidth="1.3" /></svg></div>
      <div className={ic}><Tile><span className="text-[15px] font-bold leading-none tracking-[-0.5px] text-[#2040c0]">F10</span></Tile></div>
      <div className={ic}><Tile><svg width="19" height="19" viewBox="0 0 19 19"><rect x="2" y="1" width="7" height="4" fill="#f0c040" /><rect x="10" y="7" width="7" height="4" fill="#f0c040" /><rect x="10" y="13" width="7" height="4" fill="#f0c040" /><path d="M5 5v10h5M5 9h5" fill="none" stroke="#4a90e0" /></svg></Tile></div>
      <div className={ic}><Tile><span className="text-[16px] font-bold leading-none text-[#f08020]">自</span></Tile></div>
      <div className={ic}><Tile><span className="text-[15px] font-bold leading-none tracking-[-0.5px] text-[#2040c0]">F12</span></Tile></div>
      <div className={ic}><span className="flex h-[23px] w-[23px] items-center justify-center rounded-[5px] border-2 border-[#2a9a9a] bg-white text-[14px] font-bold italic text-[#2040c0]">f(x)</span></div>
      <div className={ic}><Tile><svg width="16" height="16" viewBox="0 0 16 16"><circle cx="8" cy="8" r="5.5" fill="none" stroke="#2a6ad0" strokeWidth="2" /></svg></Tile></div>
      <div className="mx-[6px] my-[5px] h-[3px] border-y border-t-[#b0b0b0] border-b-white" />
      <div className={ic}><Tile><svg width="19" height="19" viewBox="0 0 19 19"><path d="M1 6l3-2 3 2 3-2 3 2 3-2 2 2" fill="none" stroke="#e02020" /><path d="M1 11l3-2 3 2 3-2 3 2 3-2 2 2" fill="none" stroke="#2040d0" /><path d="M1 15l3-2 3 2 3-2 3 2 3-2 2 2" fill="none" stroke="#2040d0" /></svg></Tile></div>
      <div className={`${ic} text-[15px] font-bold tracking-[-0.5px] text-[#3040b8]`}>RSI</div>
      <div className={`${ic} text-[22px] font-bold leading-none text-[#c82020]`}>$</div>
      <div className={ic}><svg width="26" height="26" viewBox="0 0 26 26"><path d="M13 1l5 6h-3v4h4V8l6 5-6 5v-3h-4v4h3l-5 6-5-6h3v-4H7v3l-6-5 6-5v3h4V7H8z" fill="#1848d0" /></svg></div>
      <div className={ic}><svg width="24" height="24" viewBox="0 0 24 24"><path d="M3 21L5 14L17 2L22 7L10 19Z" fill="#f0a020" stroke="#a87010" /><path d="M3 21L5 14L10 19Z" fill="#f8e8c0" /><path d="M17 2L22 7L20 9L15 4Z" fill="#d04020" /></svg></div>
      <div className="mx-[6px] my-[4px] h-[3px] border-y border-t-[#b0b0b0] border-b-white" />
      <div className={ic}><Tile><span className="text-[15px] font-bold leading-none text-[#2040c0]">F5</span></Tile></div>
      <div className={ic}><Tile><svg width="18" height="18" viewBox="0 0 18 18"><path d="M2 8C3 3 10 1 14 5l2-2v6h-6l2-2C10 4 6 5 5 8Z" fill="#58b848" /><path d="M16 10c-1 5-8 7-12 3l-2 2V9h6l-2 2c2 3 6 2 7-1Z" fill="#78c868" /></svg></Tile></div>
      <div className={lbl}>1</div>
      <div className={lbl}>5</div>
      <div className={lbl}>15</div>
      <div className={lbl}>30</div>
      <div className={lbl}>60</div>
      <div className="mt-[2px] flex h-[32px] items-center justify-center border-t-2 border-l-2 border-[#c8c8c8] bg-[#f8f8f8] text-[18px] text-[#2050b0]">日</div>
      <div className={`${lbl} ${cj}`}>周</div>
      <div className={`${lbl} ${cj}`}>月</div>
      <div className={lbl}>N</div>
      <div className={`${lbl} ${cj}`}>多</div>
      <div className={`${lbl} ${cj}`}>季</div>
      <div className={`${lbl} ${cj}`}>年</div>
    </div>
  );
}

function StatusBar() {
  const G = "text-[#008a00]";
  const seq = [
    { t: "3222.95", w: "w-[94px]" }, { t: "-22.40", w: "w-[81px]" }, { t: "-0.69%", w: "w-[87px]" },
  ];
  const N = ({ t, w }: { t: string; w: string }) => <span className={`${w} text-[20.5px] ${G}`}>{t}</span>;
  const V = ({ t, w }: { t: string; w: string }) => (
    <span className={`${w} flex items-center text-[20.5px] text-[#111111]`}>{t}<span className="text-[23px]">亿</span></span>
  );
  const L = ({ t, w }: { t: string; w: string }) => <span className={`${w} text-[23px] text-[#222222]`}>{t}</span>;
  return (
    <div className="flex h-[37px] w-[2160px] items-center bg-[#f0f0f0] pt-[3px] whitespace-nowrap">
      <span className="ml-[2px] flex h-[30px] w-[21px] items-center justify-center rounded-[3px] bg-[#f0a818]"><span className="h-[18px] w-[12px] rounded-[2px] border-2 border-[#fff2b0] bg-[#f8c840]" /></span>
      <span className="w-[2px]" />
      <L t="上证" w="w-[54px]" />
      {seq.map((s) => <N key={s.t} t={s.t} w={s.w} />)}
      <V t="3512" w="w-[96px]" />
      <L t="沪深" w="w-[53px]" />
      <N t="3868.81" w="w-[94px]" />
      <N t="-30.20" w="w-[81px]" />
      <N t="-0.77%" w="w-[87px]" />
      <V t="1884" w="w-[98px]" />
      <L t="创业" w="w-[52px]" />
      <N t="2212.42" w="w-[95px]" />
      <N t="-20.33" w="w-[80px]" />
      <N t="-0.91%" w="w-[87px]" />
      <V t="2253" w="w-[98px]" />
      <span className="flex h-full items-center border-l border-[#a0a0a0] pl-[5px]">
        <L t="总成交" w="w-[83px]" />
        <span className="text-[20.5px] text-[#111111]">8</span>
      </span>
    </div>
  );
}

function Watermark() {
  return (
    <div className="absolute bottom-0 right-0 flex h-[81px] w-[801px] items-center bg-[#7faad7] whitespace-nowrap">
      <span className="ml-[18px] w-[304px] shrink-0 text-[55px] font-black leading-none text-[#14148c]">公式指标网</span>
      <svg width="82" height="80" viewBox="0 0 82 80" className="shrink-0">
        <path d="M6 40A35 35 0 0 1 76 40" fill="none" stroke="#d9664f" strokeWidth="8" />
        <path d="M41 75A35 35 0 0 0 76 40" fill="none" stroke="#e9c64a" strokeWidth="8" />
        <rect x="37" y="2" width="8" height="12" fill="#e9c64a" />
        <circle cx="41" cy="9" r="3" fill="#7faad7" />
        <path d="M29 16H53V34H47V38H60V46H47V54H60V62H47V78H37V60L26 70V58L37 50V46H24V38H35V34H29Z" fill="#e9c64a" />
        <path d="M35 22H47V28H35Z" fill="#d9664f" />
        <path id="wm-arc" d="M7 44A34 34 0 0 0 37 76" fill="none" />
        <text fontSize="7" fill="#ffffff"><textPath href="#wm-arc">www.9m8.cn</textPath></text>
      </svg>
      <span className="ml-[27px] shrink-0 text-[52px] font-bold leading-none tracking-[-0.3px] text-white [font-family:'DejaVu_Serif',serif]">www.9m8.cn</span>
    </div>
  );
}

export default function App() {
  return (
    <div className="relative h-[1395px] w-[2160px] overflow-hidden bg-black [font-family:'Liberation_Sans','Noto_Sans_CJK_SC',sans-serif]">
      <TitleBar />
      <div className="flex h-[1323px] w-[2160px]">
        <div className="flex w-[1787px] shrink-0 flex-col">
          <ChartToolbar />
          <MainLegend />
          <MainChart />
          <div className="h-[2px] w-[1787px] bg-[#c00000]" />
          <SubLegend />
          <SubChart />
          <TimeAxis />
          <TabRows />
        </div>
        <RightPanel />
        <SideBar />
      </div>
      <StatusBar />
      <Watermark />
    </div>
  );
}
